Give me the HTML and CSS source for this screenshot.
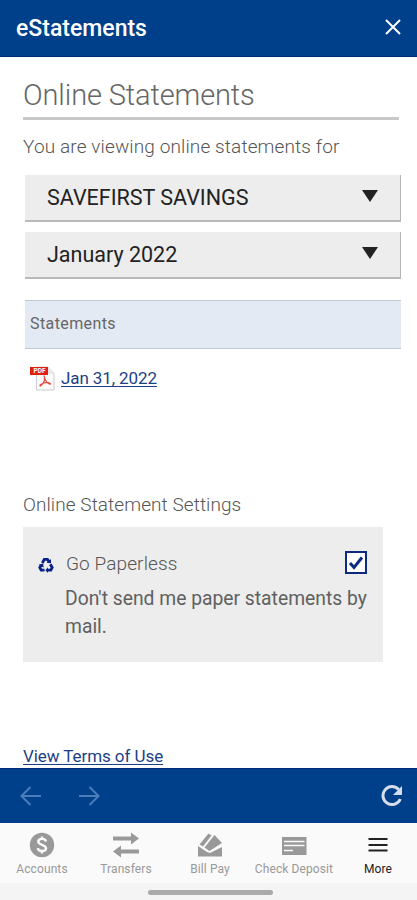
FILE: index.html
```html
<!DOCTYPE html>
<html lang="en">
<head>
    <meta charset="UTF-8">
    <meta name="viewport" content="width=device-width, initial-scale=1.0">
    <title>eStatements</title>
    <link rel="stylesheet" href="styles.css">
</head>
<body>
    <header class="topbar">
        <h1>eStatements</h1>
        <svg class="close" width="16" height="16" viewBox="0 0 16 16"><path d="M1 1L15 15M15 1L1 15"/></svg>
    </header>

    <main class="content">
        <h2>Online Statements</h2>
        <p class="intro">You are viewing online statements for</p>

        <div class="select">
            <span>SAVEFIRST SAVINGS</span>
            <svg width="16" height="12" viewBox="0 0 16 12"><path d="M0 0H16L8 12Z"/></svg>
        </div>
        <div class="select">
            <span>January 2022</span>
            <svg width="16" height="12" viewBox="0 0 16 12"><path d="M0 0H16L8 12Z"/></svg>
        </div>

        <div class="table-head">Statements</div>
        <div class="statement">
            <svg class="pdf" width="25" height="25" viewBox="0 0 25 25">
                <path class="page" d="M6.500 1H18L24 7V24H6.500Z"/>
                <path class="fold" d="M18 1V7H24"/>
                <rect class="band" x="0" y="1" width="18" height="8"/>
                <text x="3.500" y="7">PDF</text>
                <path class="swirl" d="M14 9.500C15.500 13 14 17 10.500 20C9 20 10 18 14 17C17 16 20 16.500 20.500 18C18 18.500 15 15 14 9.500"/>
            </svg>
            <a href="#">Jan 31, 2022</a>
        </div>

        <h3>Online Statement Settings</h3>
        <div class="settings">
            <svg class="recycle" width="16" height="16" viewBox="0 0 16 16">
                <path d="M4.300 6L6.300 2.400H9.500L11 4.800"/>
                <path d="M12.300 7.200L14.200 10.500L12.800 13.200H9.500"/>
                <path d="M6.500 13.200H3.200L1.800 10.500L3.300 8"/>
                <path class="tip" d="M8.600 5.800L13 6.300L13 2Z M10 10.300V16L7.300 13.200Z M0.500 7.800L5 6.500L5.800 10.500Z"/>
            </svg>
            <div class="option">
                <div class="option-row">
                    <span>Go Paperless</span>
                    <svg class="checkbox" width="22" height="23" viewBox="0 0 22 23">
                        <rect x="1" y="1" width="20" height="21"/>
                        <path d="M5 12L9 16.500L17 6.500"/>
                    </svg>
                </div>
                <p>Don't send me paper statements by<br>mail.</p>
            </div>
        </div>

        <a class="terms" href="#">View Terms of Use</a>
    </main>

    <div class="browserbar">
        <svg width="22" height="20" viewBox="0 0 22 20"><path d="M21 10H1M10.500 1L1.500 10L10.500 19"/></svg>
        <svg width="22" height="20" viewBox="0 0 22 20"><path d="M1 10H21M11.500 1L20.500 10L11.500 19"/></svg>
        <svg class="reload" width="22" height="22" viewBox="0 0 22 22">
            <path d="M17.700 4.600A9 9 0 1 0 19.300 14"/>
            <path class="tip" d="M21 1V10H12Z"/>
        </svg>
    </div>

    <nav class="tabs">
        <a class="tab" href="#">
            <svg width="26" height="26" viewBox="0 0 26 26">
                <circle cx="13" cy="13" r="12.200"/>
                <path class="dollar" d="M17 9.500C16.500 6 9.300 6 9.300 9.700C9.300 13.300 17 12.300 17 16.200C17 20 9.300 20 8.800 16.200M13 4.500V7.500M13 18.500V21.500"/>
            </svg>
            <span>Accounts</span>
        </a>
        <a class="tab" href="#">
            <svg width="28" height="26" viewBox="0 0 28 26">
                <path d="M1 4.500H19V.5L27 6.500L19 12.500V8.500H1Z M27 17.500H9V13.500L1 19.500L9 25.500V21.500H27Z"/>
            </svg>
            <span>Transfers</span>
        </a>
        <a class="tab" href="#">
            <svg width="26" height="26" viewBox="0 0 26 26">
                <path d="M1 14L10 20L13 21L25 15V24.500H1Z"/>
                <path d="M2.500 12.500L11.500 1.500L14.500 3.500L6 14.500Z"/>
                <path d="M7.500 15.500L17.500 3L25 11L12.500 19Z"/>
            </svg>
            <span>Bill Pay</span>
        </a>
        <a class="tab" href="#">
            <svg width="26" height="26" viewBox="0 0 26 26">
                <rect x="1" y="5" width="24.500" height="18"/>
                <path class="lines" d="M3 9.500H23.500M3 13.500H23.500M3 18.500H12"/>
            </svg>
            <span>Check Deposit</span>
        </a>
        <a class="tab active" href="#">
            <svg width="20" height="26" viewBox="0 0 20 26"><path d="M.5 6H19.500V8H.5Z M.5 12H19.500V14H.5Z M.5 17.500H19.500V19.500H.5Z"/></svg>
            <span>More</span>
        </a>
    </nav>
    <div class="gesture"><div class="pill"></div></div>
</body>
</html>
```
FILE: styles.css
```css
* {
    box-sizing: border-box;
}

body {
    margin: 0;
    height: 900px;
    display: flex;
    flex-direction: column;
    overflow: hidden;
    background: #fff;
    font-family: Roboto, "Liberation Sans", sans-serif;
    white-space: nowrap;
}

h1, h2, h3, p {
    margin: 0;
}

svg {
    display: block;
    flex: none;
}

.topbar {
    height: 57px;
    flex: none;
    display: flex;
    align-items: center;
    justify-content: space-between;
    padding: 0 16px;
    background: #00408a;
    border-bottom: 1px solid #002b78;
    color: #fff;
}

.topbar h1 {
    font-size: 23px;
    font-weight: 500;
}

.close {
    margin-bottom: 2px;
    fill: none;
    stroke: #fff;
    stroke-width: 2;
}

.content {
    height: 711px;
    flex: none;
    padding: 18px 16px 0 23px;
}

h2 {
    height: 45px;
    width: 376px;
    line-height: 40px;
    border-bottom: 3px solid #c8c8c8;
    font-size: 29px;
    font-weight: 300;
    letter-spacing: -0.12px;
    color: #666;
}

.intro {
    margin-top: 15px;
    line-height: 24px;
    font-size: 19px;
    font-weight: 300;
    letter-spacing: 0.12px;
    color: #555;
}

.select {
    display: flex;
    align-items: center;
    justify-content: space-between;
    height: 47px;
    margin: 16px 0 0 2px;
    padding: 0 22px;
    background: #ededed;
    border-right: 1px solid #b5b5b5;
    border-bottom: 2px solid #b9b9b9;
    font-size: 21.5px;
    color: #222;
}

.select + .select {
    margin-top: 10px;
}

.select svg {
    margin-bottom: 3px;
    fill: #222;
}

.table-head {
    height: 49px;
    margin: 21px 0 0 2px;
    padding-left: 5px;
    line-height: 45px;
    background: #e4eaf3;
    border-top: 1px solid #c0c8d4;
    border-bottom: 1px solid #c0c8d4;
    font-size: 16px;
    letter-spacing: 0.4px;
    color: #666;
}

.statement {
    display: flex;
    align-items: center;
    gap: 6px;
    height: 25px;
    margin: 17px 0 0 7px;
}

.statement a {
    margin-bottom: 1px;
    font-size: 17px;
    letter-spacing: -0.1px;
}

.statement a, .terms {
    color: #1c3f85;
    text-underline-offset: 2px;
    text-decoration-thickness: 1px;
}

.pdf .page {
    fill: #fafafa;
    stroke: #ccc;
}

.pdf .fold {
    fill: #eee;
    stroke: #ddd;
}

.pdf .band {
    fill: #e02010;
}

.pdf text {
    font-size: 6.5px;
    font-weight: 700;
    fill: #fff;
}

.pdf .swirl {
    fill: none;
    stroke: #e5483c;
    stroke-width: 1.2;
}

h3 {
    margin-top: 102px;
    line-height: 24px;
    font-size: 19px;
    font-weight: 300;
    letter-spacing: 0.08px;
    color: #555;
}

.settings {
    display: flex;
    gap: 11px;
    width: 360px;
    height: 135px;
    margin-top: 10px;
    padding: 24px 16px 0 15px;
    background: #ededed;
}

.recycle {
    margin-top: 6px;
    fill: none;
    stroke: #0a2285;
    stroke-width: 2.8;
}

.recycle .tip {
    fill: #0a2285;
    stroke: none;
}

.option {
    flex: 1;
    min-width: 0;
}

.option-row {
    display: flex;
    align-items: center;
    justify-content: space-between;
    padding-left: 1px;
    height: 25px;
    font-size: 19px;
    font-weight: 300;
    letter-spacing: 0.1px;
    color: #555;
}

.checkbox {
    margin-bottom: 2px;
    fill: #fff;
    stroke: #0b2a80;
    stroke-width: 2;
}

.checkbox path {
    fill: none;
    stroke-width: 3;
}

.option p {
    margin-top: 9px;
    line-height: 28px;
    font-size: 19.3px;
    color: #606060;
}

.terms {
    display: inline-block;
    margin-top: 83px;
    line-height: 22px;
    font-size: 17px;
    letter-spacing: -0.07px;
}

.browserbar {
    display: flex;
    align-items: center;
    gap: 36px;
    height: 55px;
    flex: none;
    padding: 0 14px 0 20px;
    background: #00408a;
    border-top: 1px solid #002b78;
}

.browserbar svg {
    fill: none;
    stroke: #4a7dba;
    stroke-width: 2;
}

.browserbar .reload {
    margin-left: auto;
    stroke: #d5deea;
    stroke-width: 3;
}

.browserbar .reload .tip {
    fill: #d5deea;
    stroke: none;
}

.tabs {
    display: flex;
    height: 60px;
    flex: none;
    margin-right: -3px;
    background: #fafafa;
}

.tab {
    flex: 1;
    display: flex;
    flex-direction: column;
    align-items: center;
    padding-top: 9px;
    font-size: 12px;
    line-height: 16px;
    letter-spacing: 0.1px;
    color: #999;
    fill: #999;
    text-decoration: none;
}

.tab span {
    margin-top: 3px;
}

.tab.active {
    color: #222;
    fill: #222;
}

.dollar {
    fill: none;
    stroke: #fafafa;
    stroke-width: 2.4;
}

.lines {
    stroke: #fafafa;
    stroke-width: 1.5;
}

.gesture {
    flex: 1;
    padding: 7px 0 0 148px;
    background: #f4f4f4;
}

.pill {
    width: 125px;
    height: 5px;
    border-radius: 3px;
    background: #aaa;
}
```
